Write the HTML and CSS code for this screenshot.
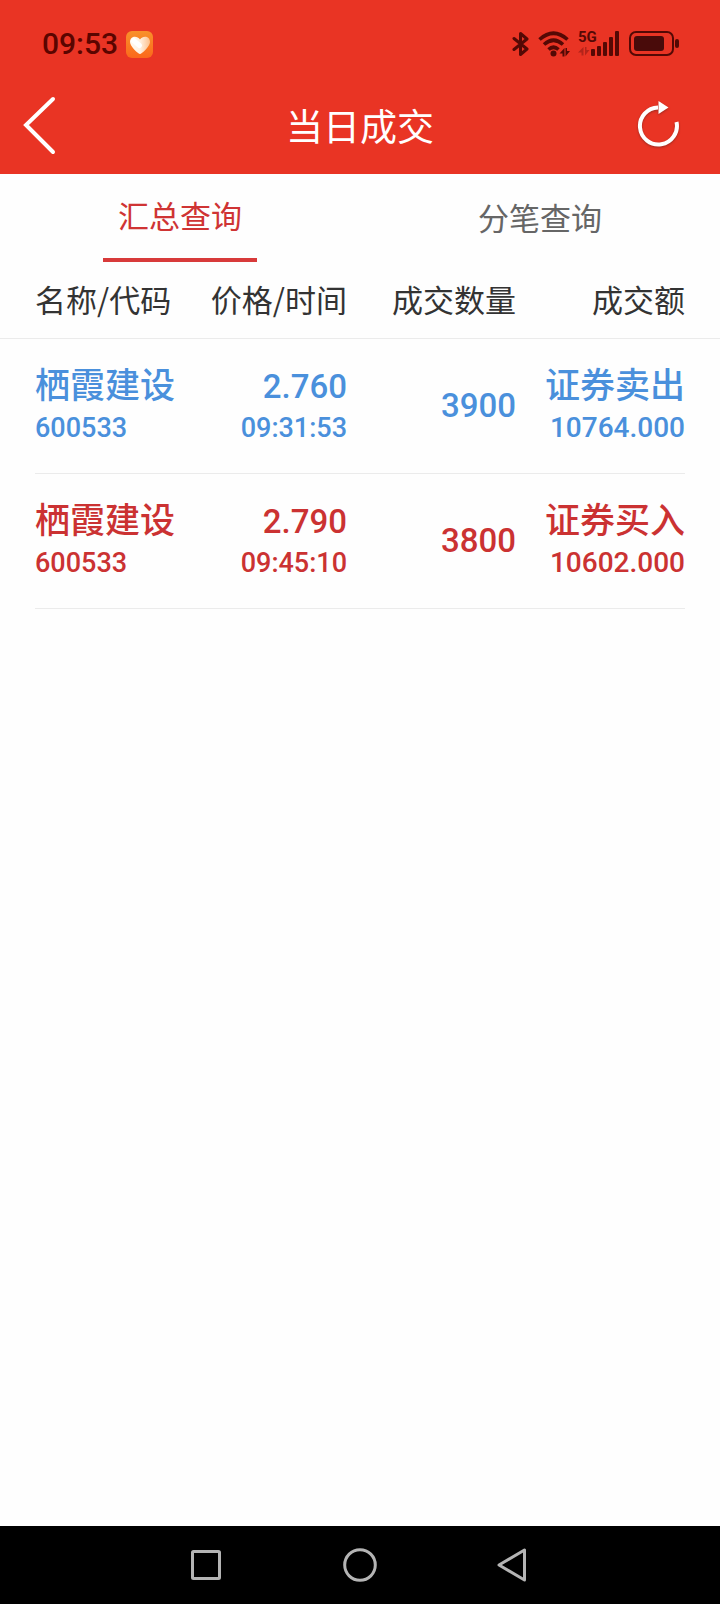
FILE: index.html
```html
<!DOCTYPE html>
<html lang="zh-CN">
<head>
    <meta charset="UTF-8">
    <meta name="viewport" content="width=device-width, initial-scale=1.0">
    <title>当日成交</title>
    <link rel="stylesheet" href="styles.css">
</head>
<body>
    <header class="header">
        <div class="status-bar">
            <span class="time">09:53</span>
            <svg class="app-icon" width="27" height="27" viewBox="0 0 27 27" aria-hidden="true">
                <defs>
                    <linearGradient id="app-bg" x1="0" y1="0" x2="0" y2="1">
                        <stop offset="0" stop-color="#f8912b"/>
                        <stop offset="1" stop-color="#fb681b"/>
                    </linearGradient>
                    <linearGradient id="heart" x1="0" y1="0" x2="1" y2="0">
                        <stop offset="0" stop-color="#fff8ef"/>
                        <stop offset="0.5" stop-color="#fff1e2"/>
                        <stop offset="1" stop-color="#fdc08c"/>
                    </linearGradient>
                </defs>
                <rect width="27" height="27" rx="6" fill="url(#app-bg)"/>
                <path d="M14 23 C12.500 23 4 15.500 4 11 C4 5 11 4 14 8.500 C17 4 24 5 24 11 C24 15.500 15.500 23 14 23Z" fill="url(#heart)"/>
                <path d="M7.500 9.500 L13.500 14.500" stroke="#fff" stroke-width="5" stroke-linecap="round"/>
            </svg>
            <div class="status-icons" aria-hidden="true">
                <svg width="18" height="26" viewBox="0 0 18 26" fill="none" stroke="#540905" stroke-width="3" stroke-linejoin="round" stroke-linecap="round">
                    <path d="M2 7.500 L15 18 L8.500 23.500 V2.500 L15 8 L2 18.500"/>
                </svg>
                <svg class="wifi" width="32" height="26" viewBox="0 0 32 26" fill="none" stroke="#540905" stroke-width="3.600">
                    <path d="M1.500 8.500 Q15.500 -4 29.500 8.500"/>
                    <path d="M6 13.500 Q15.500 5 25 13.500"/>
                    <path d="M10.500 18.500 Q15.500 14 20.500 18.500"/>
                    <circle cx="15.500" cy="22.500" r="3" fill="#540905" stroke="none"/>
                    <path d="M26.500 17 V25.500 H24.500 V22.500 H21.500Z M27.500 25.500 V17 H29 V20 H32Z" fill="#540905" stroke="none"/>
                </svg>
                <svg class="signal" width="43" height="40" viewBox="0 -6 43 40" fill="#540905">
                    <text class="network" x="0" y="12">5G</text>
                    <path d="M5.500 17 V25.500 H3.500 V22.500 H0Z M7 25.500 V17 H8.500 V20 H11.500Z" fill="#b3241a"/>
                    <rect x="13" y="19" width="4" height="7" rx="1"/>
                    <rect x="19" y="16" width="4" height="10" rx="1"/>
                    <rect x="25" y="12" width="4" height="14" rx="1"/>
                    <rect x="31" y="7" width="4" height="19" rx="1"/>
                    <rect x="37" y="1" width="4" height="25" rx="1"/>
                </svg>
                <svg width="50" height="26" viewBox="0 0 50 26">
                    <rect x="1" y="1" width="43" height="23" rx="6" fill="none" stroke="#540905" stroke-width="2"/>
                    <rect x="5" y="5" width="30" height="15" rx="3" fill="#490b0a"/>
                    <rect x="46" y="8" width="4" height="9" rx="2" fill="#540905"/>
                </svg>
            </div>
        </div>
        <div class="title-bar">
            <button class="icon-button" type="button" aria-label="返回">
                <svg width="34" height="60" viewBox="0 0 34 60" fill="none" stroke="#fff" stroke-width="4" stroke-linecap="round">
                    <path d="M31 4 L4 30 L31 57"/>
                </svg>
            </button>
            <h1>当日成交</h1>
            <button class="icon-button" type="button" aria-label="刷新">
                <svg class="refresh" width="44" height="52" viewBox="0 0 44 52">
                    <path d="M40.500 23 A18.500 18.500 0 1 1 22 8.500" fill="none" stroke="#fff" stroke-width="4"/>
                    <path d="M22.500 2 L32.500 8.500 L22.500 15Z" fill="#fff"/>
                </svg>
            </button>
        </div>
    </header>

    <nav class="tabs">
        <a class="tab active" href="#summary">汇总查询</a>
        <a class="tab" href="#detail">分笔查询</a>
    </nav>

    <main class="content">
        <table class="deals">
            <thead>
                <tr>
                    <th>名称/代码</th>
                    <th>价格/时间</th>
                    <th>成交数量</th>
                    <th>成交额</th>
                </tr>
            </thead>
            <tbody>
                <tr class="sell">
                    <td><div class="main">栖霞建设</div><div class="sub">600533</div></td>
                    <td><div class="main number">2.760</div><div class="sub">09:31:53</div></td>
                    <td><div class="main number">3900</div></td>
                    <td><div class="main">证券卖出</div><div class="sub amount">10764.000</div></td>
                </tr>
                <tr class="buy">
                    <td><div class="main">栖霞建设</div><div class="sub">600533</div></td>
                    <td><div class="main number">2.790</div><div class="sub">09:45:10</div></td>
                    <td><div class="main number">3800</div></td>
                    <td><div class="main">证券买入</div><div class="sub amount">10602.000</div></td>
                </tr>
            </tbody>
        </table>
    </main>

    <footer class="system-nav">
        <button type="button" aria-label="最近任务">
            <svg width="36" height="36" viewBox="0 0 36 36"><rect x="4.500" y="4.500" width="27" height="27" rx="1"/></svg>
        </button>
        <button type="button" aria-label="主屏幕">
            <svg width="36" height="36" viewBox="0 0 36 36"><circle cx="18" cy="18" r="15.300"/></svg>
        </button>
        <button type="button" aria-label="返回上一页">
            <svg width="36" height="36" viewBox="0 0 36 36"><path d="M28.500 3 V33 L3 18Z"/></svg>
        </button>
    </footer>
</body>
</html>
```
FILE: styles.css
```css
* {
    box-sizing: border-box;
}
body {
    margin: 0;
    min-height: 100vh;
    display: flex;
    flex-direction: column;
    background-color: #fefefe;
    color: #333;
    font-family: "Noto Sans CJK SC", sans-serif;
}
svg {
    display: block;
}
button {
    padding: 0;
    border: none;
    background: none;
    cursor: pointer;
}
.header {
    background-color: #e93424;
    color: #fff;
}
.status-bar {
    display: flex;
    align-items: center;
    height: 78px;
    padding: 10px 41px 0 42px;
}
.time {
    color: #5a0500;
    font: 500 30px/36px Roboto, sans-serif;
}
.app-icon {
    margin-left: 8px;
}
.status-icons {
    display: flex;
    align-items: center;
    gap: 8px;
    margin-left: auto;
}
.network {
    font: bold 15px Roboto, sans-serif;
}
.title-bar {
    display: flex;
    align-items: center;
    justify-content: space-between;
    height: 96px;
    padding: 0 40px 2px 22px;
}
.title-bar h1 {
    flex: 1;
    margin: 0;
    padding-left: 28px;
    font-size: 37px;
    font-weight: 400;
    line-height: 48px;
    text-align: center;
}
.refresh {
    filter: drop-shadow(0 1px 1px #9c2a20);
}
.tabs {
    display: flex;
    justify-content: space-around;
}
.tab {
    height: 88px;
    padding: 0 15px;
    color: #666;
    font-size: 31px;
    line-height: 86px;
    text-decoration: none;
}
.tab.active {
    border-bottom: 4px solid #d83a3a;
    color: #cf3434;
    line-height: 82px;
}
.content {
    flex: 1;
}
.deals,
.deals thead,
.deals tbody {
    display: block;
}
.deals tr {
    display: grid;
    grid-template-columns: 24fr 24fr 26fr 26fr;
    align-items: center;
    border-bottom: 1px solid #ebebeb;
}
.deals thead tr {
    padding: 0 35px 2px;
}
.deals tbody tr {
    margin: 0 35px;
}
.deals th,
.deals td {
    padding: 0;
    text-align: right;
    white-space: nowrap;
}
.deals th:first-child,
.deals td:first-child {
    text-align: left;
}
.deals th {
    font-size: 31px;
    font-weight: 400;
    line-height: 74px;
}
.deals td {
    padding: 26px 0;
    font-family: Roboto, "Noto Sans CJK SC", sans-serif;
    font-weight: 500;
}
.main {
    font-size: 35px;
    line-height: 44px;
}
.main.number {
    font-size: 33px;
}
.sub {
    font-size: 27px;
    line-height: 38px;
}
.amount {
    font-size: 28px;
}
.sell {
    color: #4a90dc;
}
.buy {
    color: #cb3232;
}
.system-nav {
    display: flex;
    height: 78px;
    padding: 0 18%;
    background-color: #000;
}
.system-nav button {
    display: flex;
    flex: 1;
    align-items: center;
    justify-content: center;
}
.system-nav svg {
    fill: none;
    stroke: #b4b4b4;
    stroke-width: 3px;
    stroke-linejoin: round;
}
```
